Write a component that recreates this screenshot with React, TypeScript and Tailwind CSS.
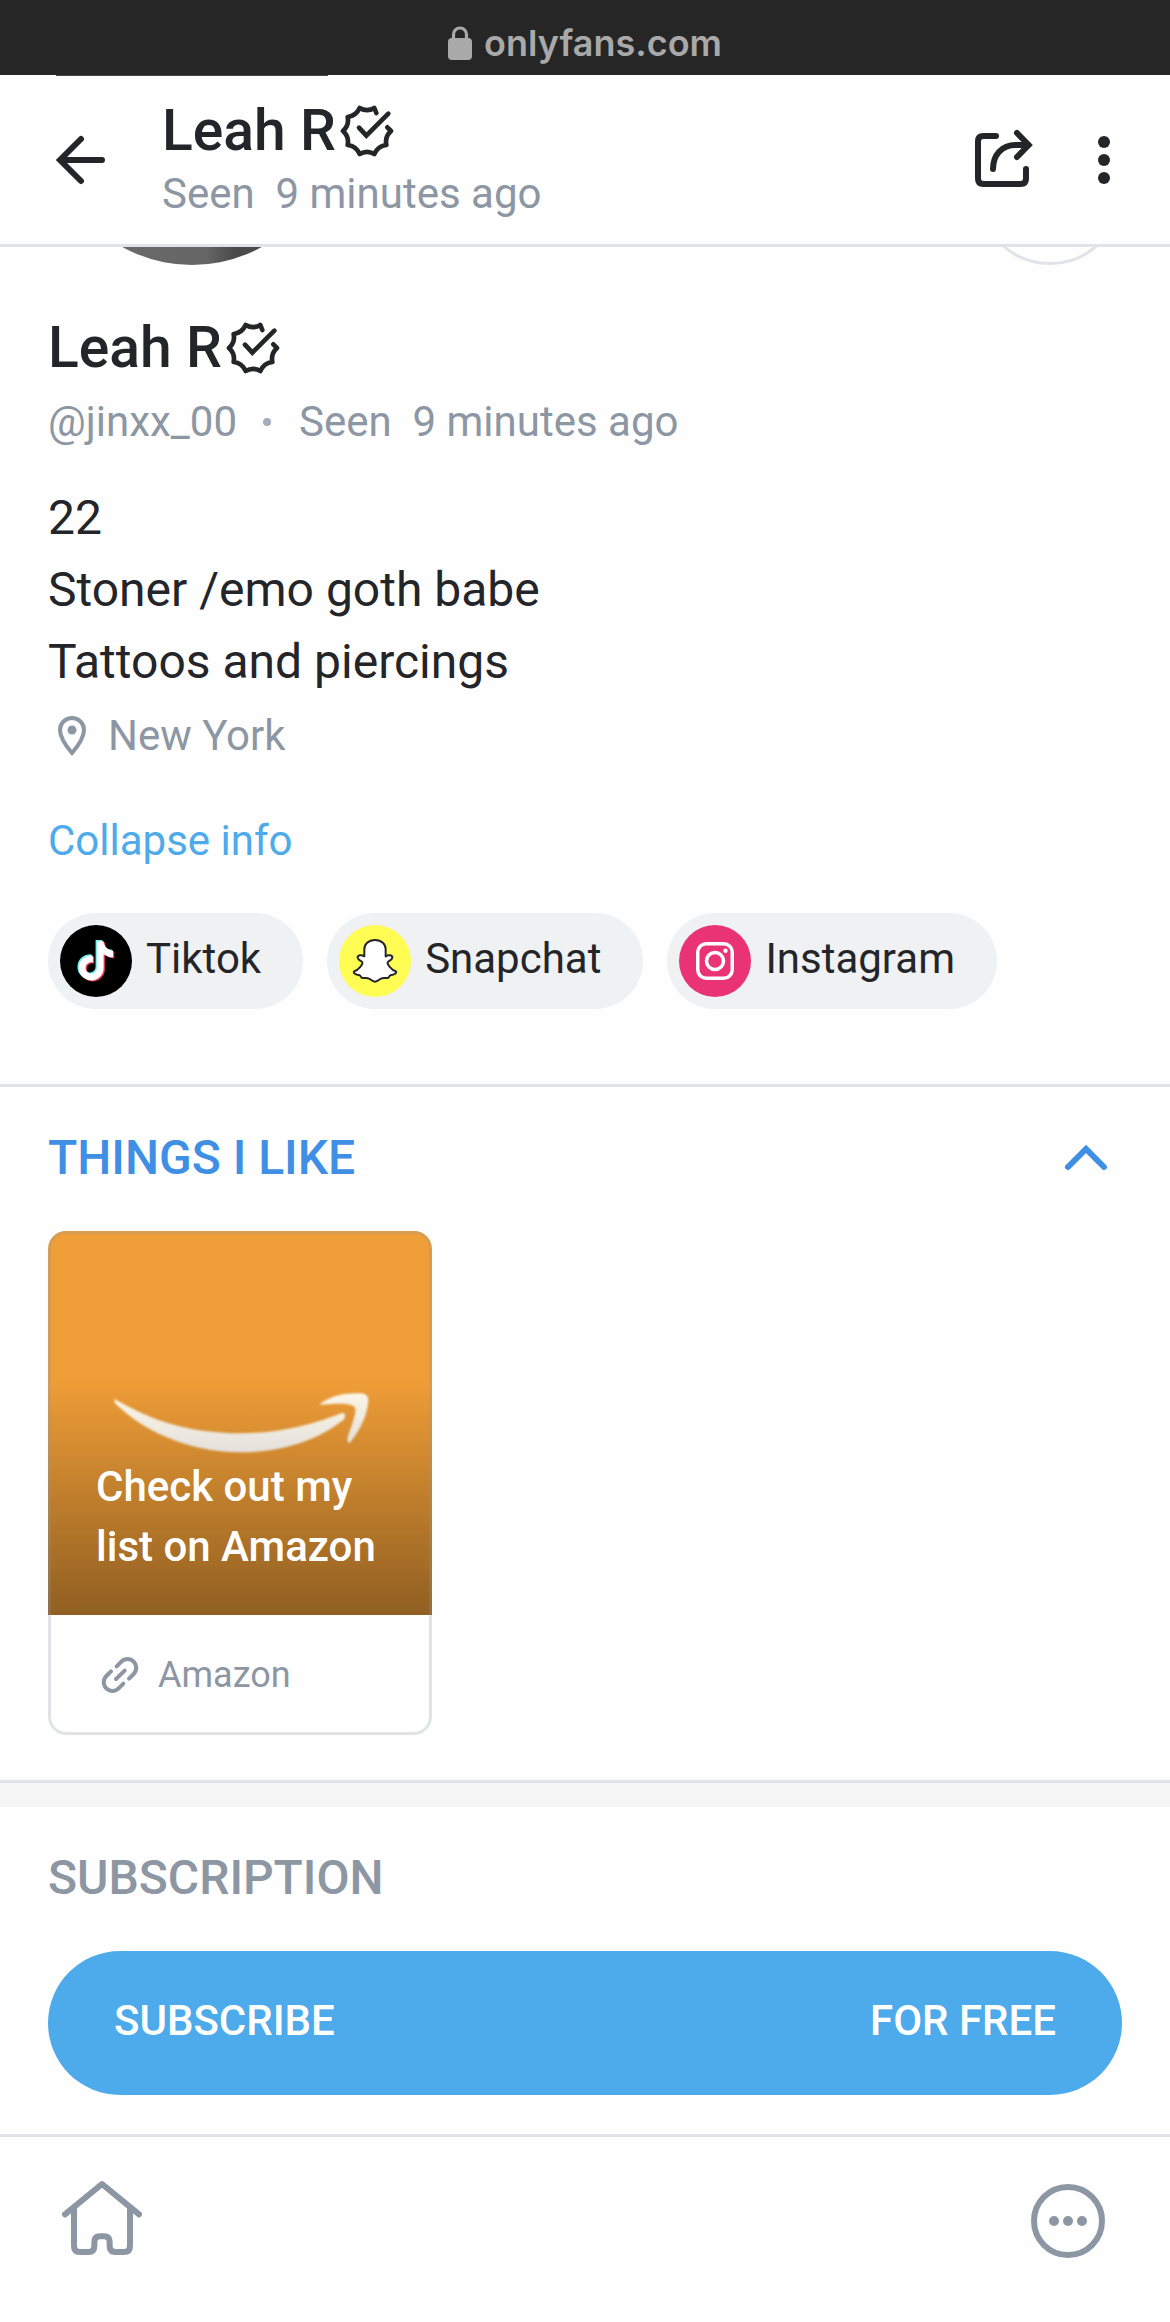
import type { ReactNode } from "react";

function VerifiedBadge() {
  return (
    <svg viewBox="21 36 162 162" className="ml-1 size-[54px] shrink-0" fill="none" stroke="currentColor" strokeWidth="14" strokeLinecap="round" strokeLinejoin="round" role="img" aria-label="Verified">
      <path d="M130 63L124 48Q102 61 80 48Q69 72 44 75Q49 100 30 117Q49 134 44 159Q69 162 80 186Q102 173 124 186Q135 162 160 159Q155 134 174 117L163 106" />
      <path d="M78 107L100 131L166 65" strokeLinejoin="miter" />
    </svg>
  );
}

function BackIcon() {
  return (
    <svg viewBox="0 0 72 72" className="size-[72px]" fill="none" stroke="currentColor" strokeWidth="6" strokeLinecap="round" aria-hidden="true">
      <path d="M39 15L18 36L39 57M19 36H60" />
    </svg>
  );
}

function ShareIcon() {
  return (
    <svg viewBox="216 204 192 192" className="size-16" fill="none" stroke="currentColor" strokeWidth="18" strokeLinecap="round" aria-hidden="true">
      <path d="M288 228H250Q234 228 234 244V356Q234 372 250 372H362Q378 372 378 356V327" />
      <path d="M279 327C279 285 305 255 347 255H384" />
      <path d="M351 219L386 255L351 291" />
    </svg>
  );
}

function KebabIcon() {
  return (
    <svg viewBox="0 0 72 72" className="size-[72px]" fill="currentColor" aria-hidden="true">
      <circle cx="36" cy="18" r="6" />
      <circle cx="36" cy="36" r="6" />
      <circle cx="36" cy="54" r="6" />
    </svg>
  );
}

function LockIcon() {
  return (
    <svg viewBox="0 0 24 34" className="h-[34px] w-6" aria-hidden="true">
      <path d="M5.5 14V8.500a6.500 6.500 0 0 1 13 0V14" fill="none" stroke="currentColor" strokeWidth="3.200" />
      <rect y="12" width="24" height="22" rx="4" fill="currentColor" />
    </svg>
  );
}

function PinIcon() {
  return (
    <svg viewBox="0 0 48 48" className="size-12" fill="none" stroke="currentColor" strokeWidth="4" aria-hidden="true">
      <path d="M24 41C18 34 12 25 12 18A12 12 0 0 1 36 18C36 25 30 34 24 41Z" />
      <circle cx="24" cy="18" r="4.500" fill="currentColor" stroke="none" />
    </svg>
  );
}

const NOTE =
  "M448,209.91a210.06,210.06,0,0,1-122.77-39.25V349.38A162.55,162.55,0,1,1,185,188.31V278.2a74.62,74.62,0,1,0,52.23,71.18V0l88,0a121.18,121.18,0,0,0,1.86,22.17h0A122.18,122.18,0,0,0,381,102.39a121.43,121.43,0,0,0,67,20.14Z";

function TiktokIcon() {
  return (
    <svg viewBox="0 0 72 72" className="size-[72px]" aria-hidden="true">
      <circle cx="36" cy="36" r="36" fill="#000" />
      <g transform="translate(18.500 16) scale(0.0765)">
        <path d={NOTE} fill="#6eeee9" transform="translate(-14 -12)" />
        <path d={NOTE} fill="#ea3d5c" transform="translate(20 16)" />
        <path d={NOTE} fill="#fff" transform="translate(3 3)" />
      </g>
    </svg>
  );
}

function SnapchatIcon() {
  return (
    <svg viewBox="-108 -108 216 216" className="size-[72px]" aria-hidden="true">
      <circle r="108" fill="#fffc54" />
      <path
        d="M0 -63C-20 -63 -32 -50 -32 -35V-14C-40 -20 -53 -18 -52 -10C-51 -2 -40 0 -38 4C-36 10 -50 28 -62 31C-67 34 -60 41 -46 43C-41 45 -44 50 -38 51C-30 52 -24 49 -16 54C-8 60 -5 62 0 62C5 62 8 60 16 54C24 49 30 52 38 51C44 50 41 45 46 43C60 41 67 34 62 31C50 28 36 10 38 4C40 0 51 -2 52 -10C53 -18 40 -20 32 -14V-35C32 -50 20 -63 0 -63Z"
        fill="#fff"
        stroke="#242529"
        strokeWidth="6"
        strokeLinejoin="round"
      />
    </svg>
  );
}

function InstagramIcon() {
  return (
    <svg viewBox="0 0 72 72" className="size-[72px]" fill="none" stroke="#fff" strokeWidth="3.500" aria-hidden="true">
      <circle cx="36" cy="36" r="36" fill="#ea3375" stroke="none" />
      <rect x="18.750" y="18.750" width="34.500" height="34.500" rx="8.500" />
      <circle cx="36" cy="36" r="8.500" />
      <circle cx="46.500" cy="25.700" r="2.200" fill="#fff" stroke="none" />
    </svg>
  );
}

function SmileLogo() {
  return (
    <svg viewBox="144 363 1152 1152" className="absolute inset-0 size-full" aria-hidden="true">
      <filter id="soft">
        <feGaussianBlur stdDeviation="3" />
      </filter>
      <linearGradient id="shade" x1="0" y1="0" x2="0" y2="1">
        <stop offset="0" stopColor="#fbf6e6" />
        <stop offset="1" stopColor="#e4e0dc" />
      </linearGradient>
      <g fill="url(#shade)" filter="url(#soft)">
        <path d="M343 866C450 930 560 968 720 970C840 970 950 940 1028 908Q1042 912 1030 930C960 985 860 1026 720 1027C560 1026 430 962 345 880Z" />
        <path d="M958 884C990 855 1040 847 1085 850Q1105 853 1105 870C1103 915 1080 962 1048 1000Q1038 995 1045 975C1060 935 1072 900 1064 892C1050 875 1000 883 958 884Z" />
      </g>
    </svg>
  );
}

function LinkIcon() {
  return (
    <svg viewBox="288 602 144 144" className="size-12" fill="none" stroke="currentColor" strokeWidth="12" strokeLinecap="round" aria-hidden="true">
      <path d="M350 648L364 634A26 26 0 0 1 401 671L387 685" />
      <path d="M370 700L356 714A26 26 0 0 1 319 677L333 663" />
      <path d="M348 686L374 661" />
    </svg>
  );
}

function ChevronUp() {
  return (
    <svg viewBox="0 0 72 72" className="size-[72px]" fill="none" stroke="currentColor" strokeWidth="6" strokeLinecap="round" aria-hidden="true">
      <path d="M18 45L36 27L54 45" />
    </svg>
  );
}

function HomeIcon() {
  return (
    <svg viewBox="186 747 240 240" className="size-20" fill="none" stroke="currentColor" strokeWidth="18" strokeLinecap="round" strokeLinejoin="round" aria-hidden="true">
      <path d="M195 853L306 762L417 853" />
      <path d="M222 838V948Q222 966 240 966H265Q283 966 283 948V936Q283 919 300 919H312Q329 919 329 936V948Q329 966 347 966H372Q390 966 390 948V838" />
    </svg>
  );
}

function MoreIcon() {
  return (
    <svg viewBox="0 0 80 80" className="size-20" fill="currentColor" aria-hidden="true">
      <circle cx="40" cy="42" r="34" fill="none" stroke="currentColor" strokeWidth="6" />
      <circle cx="26" cy="42" r="5" />
      <circle cx="40" cy="42" r="5" />
      <circle cx="54" cy="42" r="5" />
    </svg>
  );
}

function SocialPill({ icon, label }: { icon: ReactNode; label: string }) {
  return (
    <a href="#" className="flex h-24 items-center gap-3.5 rounded-full bg-[#f0f1f3] pr-[42px] pl-3">
      {icon}
      <span className="pb-1 text-[42px] leading-[60px]">{label}</span>
    </a>
  );
}

export default function App() {
  return (
    <div className="flex min-h-screen flex-col bg-[#fefefe] font-[Roboto,sans-serif] text-[#242529]">
      <div className="flex h-[75px] items-center justify-center gap-3 bg-[#262626] pt-2.5 text-[#a9a9a9]">
        <LockIcon />
        <span className="font-[Inter,sans-serif] text-[36px] leading-[48px] font-semibold">onlyfans.com</span>
      </div>

      <header className="relative flex h-[172px] items-center border-b-[3px] border-[#e2e3e8] pr-[30px] pl-[42px]">
        <div className="absolute top-0 left-14 h-px w-[272px] bg-[#4a4546]" />
        <button type="button" aria-label="Back">
          <BackIcon />
        </button>
        <div className="ml-12 flex-1 pt-0.5">
          <div className="flex items-center text-[57px] leading-[66px] font-medium">
            Leah R<VerifiedBadge />
          </div>
          <div className="text-[42px] leading-[60px] text-[#8d96a3]">Seen&nbsp; 9 minutes ago</div>
        </div>
        <button type="button" aria-label="Share">
          <ShareIcon />
        </button>
        <button type="button" aria-label="More options" className="ml-8">
          <KebabIcon />
        </button>
      </header>

      <main className="flex-1">
        <div className="flex h-[18px] items-end justify-between overflow-hidden px-12">
          <div className="size-[288px] shrink-0 rounded-full bg-linear-to-r from-[#686868] from-30% via-[#666] via-55% to-[#4a4a4a] to-65%" />
          <div className="size-36 shrink-0 rounded-full border-[3px] border-[#e2e3e8]" />
        </div>

        <section className="border-b-[3px] border-[#e2e3e8] px-12 pt-[47px] pb-[75px]">
          <h1 className="flex items-center text-[57px] leading-[72px] font-medium">
            Leah R<VerifiedBadge />
          </h1>
          <div className="mt-2 flex items-center text-[42px] leading-[60px] text-[#8d96a3]">
            <span>@jinxx_00</span>
            <span className="mr-7 ml-[26px] size-2 rounded-full bg-[#a5aeb8]" />
            <span>Seen&nbsp; 9 minutes ago</span>
          </div>
          <p className="mt-[30px] text-[48px] leading-[72px]">
            22
            <br />
            Stoner /emo goth babe
            <br />
            Tattoos and piercings
          </p>
          <div className="mt-2 flex items-center gap-3 text-[42px] leading-[60px] text-[#8d96a3]">
            <PinIcon />
            New York
          </div>
          <button type="button" className="mt-[45px] block text-[42px] leading-[60px] text-[#4daaeb]">
            Collapse info
          </button>
          <div className="mt-[42px] flex flex-wrap gap-6">
            <SocialPill icon={<TiktokIcon />} label="Tiktok" />
            <SocialPill icon={<SnapchatIcon />} label="Snapchat" />
            <SocialPill icon={<InstagramIcon />} label="Instagram" />
          </div>
        </section>

        <section className="border-b-[3px] border-[#e2e3e8] px-12 pt-[35px] pb-[45px]">
          <button type="button" aria-expanded="true" className="flex w-full items-center justify-between text-[#3f8fe5]">
            <span className="text-[48px] leading-[72px] font-medium">THINGS I LIKE</span>
            <ChevronUp />
          </button>
          <a href="#" className="relative mt-[37px] block w-96 overflow-hidden rounded-[18px]">
            <div className="relative flex h-96 items-end bg-[#f09e37] px-12 pb-[38px]">
              <div className="absolute inset-0 bg-linear-to-b from-transparent from-38% to-black/40" />
              <SmileLogo />
              <span className="relative text-[42px] leading-[60px] font-medium text-white">Check out my list on Amazon</span>
            </div>
            <div className="flex h-[120px] items-center gap-3.5 px-12 text-[36px] leading-[48px] text-[#8d96a3]">
              <LinkIcon />
              Amazon
            </div>
            <div className="absolute inset-0 rounded-[18px] border-[3px] border-[#8a96a3]/25" />
          </a>
        </section>

        <div className="h-6 bg-[#f6f6f6]" />

        <section className="px-12 pt-[35px] pb-[39px]">
          <h2 className="text-[48px] leading-[72px] font-medium text-[#8d96a3]">SUBSCRIPTION</h2>
          <button type="button" className="mt-[37px] flex h-36 w-full items-center justify-between rounded-full bg-[#4daaeb] px-[66px] pb-1 text-[42px] leading-[60px] font-medium text-white">
            <span>SUBSCRIBE</span>
            <span>FOR FREE</span>
          </button>
        </section>
      </main>

      <nav className="flex h-[188px] items-start justify-between border-t-[3px] border-[#e2e3e8] px-[62px] pt-[42px] text-[#8d96a3]">
        <a href="#" aria-label="Home">
          <HomeIcon />
        </a>
        <button type="button" aria-label="More">
          <MoreIcon />
        </button>
      </nav>
    </div>
  );
}
